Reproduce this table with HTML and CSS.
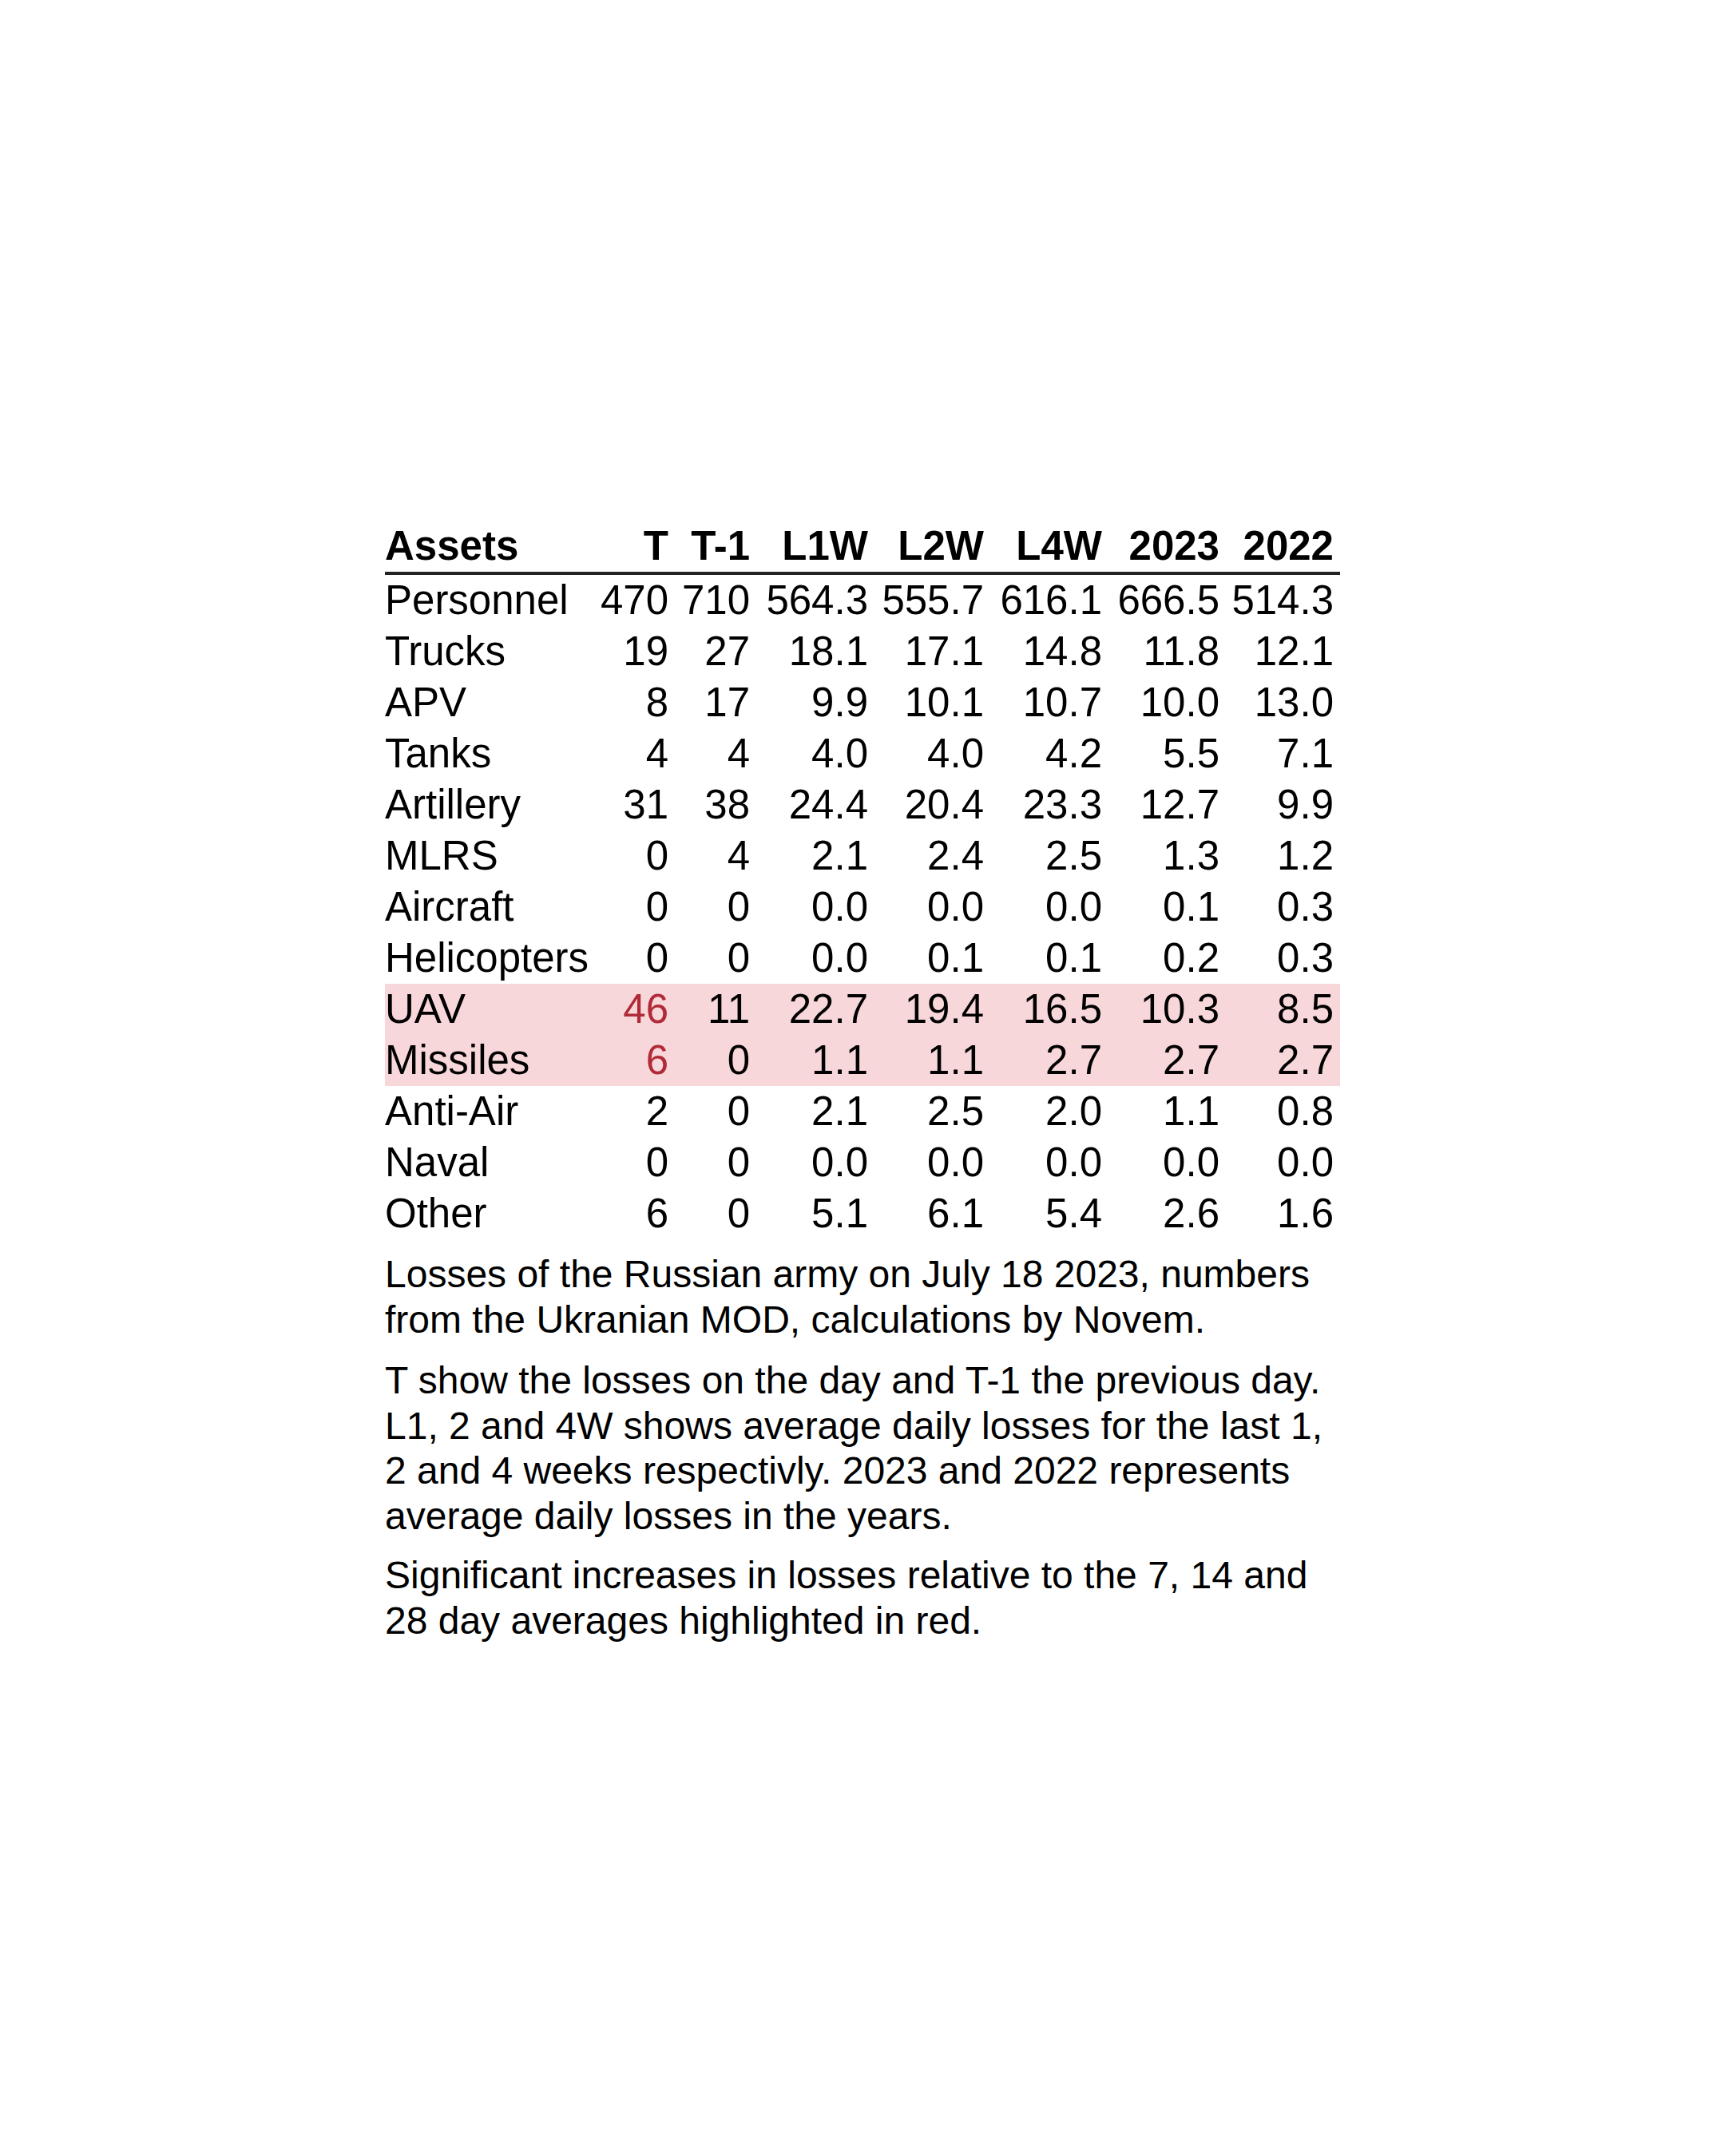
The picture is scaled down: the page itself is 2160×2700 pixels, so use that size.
FILE: index.html
```html
<!DOCTYPE html>
<html lang="en">
<head>
<meta charset="utf-8">
<title>Losses of the Russian army</title>
<link rel="stylesheet" href="styles.css">
</head>
<body>
<main class="page">
  <figure class="figure">
    <table class="losses">
      <colgroup>
        <col class="c-asset">
        <col class="c-t">
        <col class="c-t1">
        <col class="c-l1w">
        <col class="c-l2w">
        <col class="c-l4w">
        <col class="c-y23">
        <col class="c-y22">
      </colgroup>
      <thead>
        <tr>
          <th class="name">Assets</th>
          <th>T</th>
          <th>T-1</th>
          <th>L1W</th>
          <th>L2W</th>
          <th>L4W</th>
          <th>2023</th>
          <th>2022</th>
        </tr>
      </thead>
      <tbody>
        <tr><td class="name">Personnel</td><td>470</td><td>710</td><td>564.3</td><td>555.7</td><td>616.1</td><td>666.5</td><td>514.3</td></tr>
        <tr><td class="name">Trucks</td><td>19</td><td>27</td><td>18.1</td><td>17.1</td><td>14.8</td><td>11.8</td><td>12.1</td></tr>
        <tr><td class="name">APV</td><td>8</td><td>17</td><td>9.9</td><td>10.1</td><td>10.7</td><td>10.0</td><td>13.0</td></tr>
        <tr><td class="name">Tanks</td><td>4</td><td>4</td><td>4.0</td><td>4.0</td><td>4.2</td><td>5.5</td><td>7.1</td></tr>
        <tr><td class="name">Artillery</td><td>31</td><td>38</td><td>24.4</td><td>20.4</td><td>23.3</td><td>12.7</td><td>9.9</td></tr>
        <tr><td class="name">MLRS</td><td>0</td><td>4</td><td>2.1</td><td>2.4</td><td>2.5</td><td>1.3</td><td>1.2</td></tr>
        <tr><td class="name">Aircraft</td><td>0</td><td>0</td><td>0.0</td><td>0.0</td><td>0.0</td><td>0.1</td><td>0.3</td></tr>
        <tr><td class="name">Helicopters</td><td>0</td><td>0</td><td>0.0</td><td>0.1</td><td>0.1</td><td>0.2</td><td>0.3</td></tr>
        <tr class="hl"><td class="name">UAV</td><td class="up">46</td><td>11</td><td>22.7</td><td>19.4</td><td>16.5</td><td>10.3</td><td>8.5</td></tr>
        <tr class="hl"><td class="name">Missiles</td><td class="up">6</td><td>0</td><td>1.1</td><td>1.1</td><td>2.7</td><td>2.7</td><td>2.7</td></tr>
        <tr><td class="name">Anti-Air</td><td>2</td><td>0</td><td>2.1</td><td>2.5</td><td>2.0</td><td>1.1</td><td>0.8</td></tr>
        <tr><td class="name">Naval</td><td>0</td><td>0</td><td>0.0</td><td>0.0</td><td>0.0</td><td>0.0</td><td>0.0</td></tr>
        <tr><td class="name">Other</td><td>6</td><td>0</td><td>5.1</td><td>6.1</td><td>5.4</td><td>2.6</td><td>1.6</td></tr>
      </tbody>
    </table>
    <figcaption class="notes">
      <p class="note note-lead">Losses of the Russian army on July 18 2023, numbers from the Ukranian MOD, calculations by Novem.</p>
      <p class="note">T show the losses on the day and T-1 the previous day. L1, 2 and 4W shows average daily losses for the last 1, 2 and 4 weeks respectivly. 2023 and 2022 represents average daily losses in the years.</p>
      <p class="note">Significant increases in losses relative to the 7, 14 and 28 day averages highlighted in red.</p>
    </figcaption>
  </figure>
</main>
</body>
</html>
```

FILE: styles.css
```css
html, body {
  margin: 0;
  padding: 0;
  background: #ffffff;
}

body {
  font-family: "Liberation Sans", Arial, sans-serif;
  color: #000000;
}

.page {
  min-height: 2700px;
  display: flex;
  justify-content: center;
  align-items: flex-start;
  padding-top: 652px;
  box-sizing: border-box;
}

.figure {
  margin: 0;
  width: 1196px;
}

.losses {
  width: 1196px;
  table-layout: fixed;
  border-collapse: collapse;
  border-spacing: 0;
  font-size: 51px;
  line-height: 64px;
}

.c-asset { width: 263px; }
.c-t { width: 100px; }
.c-t1 { width: 102px; }
.c-l1w { width: 148px; }
.c-l2w { width: 145px; }
.c-l4w { width: 148px; }
.c-y23 { width: 147px; }
.c-y22 { width: 143px; }

.losses th,
.losses td {
  padding: 0 8px 0 0;
  height: 64px;
  text-align: right;
  white-space: nowrap;
  vertical-align: top;
}

.losses th {
  font-weight: bold;
  border-bottom: 4px solid #222222;
}

.losses .name {
  text-align: left;
  padding: 0;
}

.losses tr.hl td {
  background: #f8d7da;
}

.losses td.up {
  color: #b02a37;
}

.notes {
  margin-top: 16px;
  font-size: 48px;
  line-height: 56.5px;
}

.note {
  margin: 18px 0 0 0;
}

.note-lead {
  margin: 0 0 20px 0;
}

.note-lead + .note {
  margin-top: 0;
}
```
